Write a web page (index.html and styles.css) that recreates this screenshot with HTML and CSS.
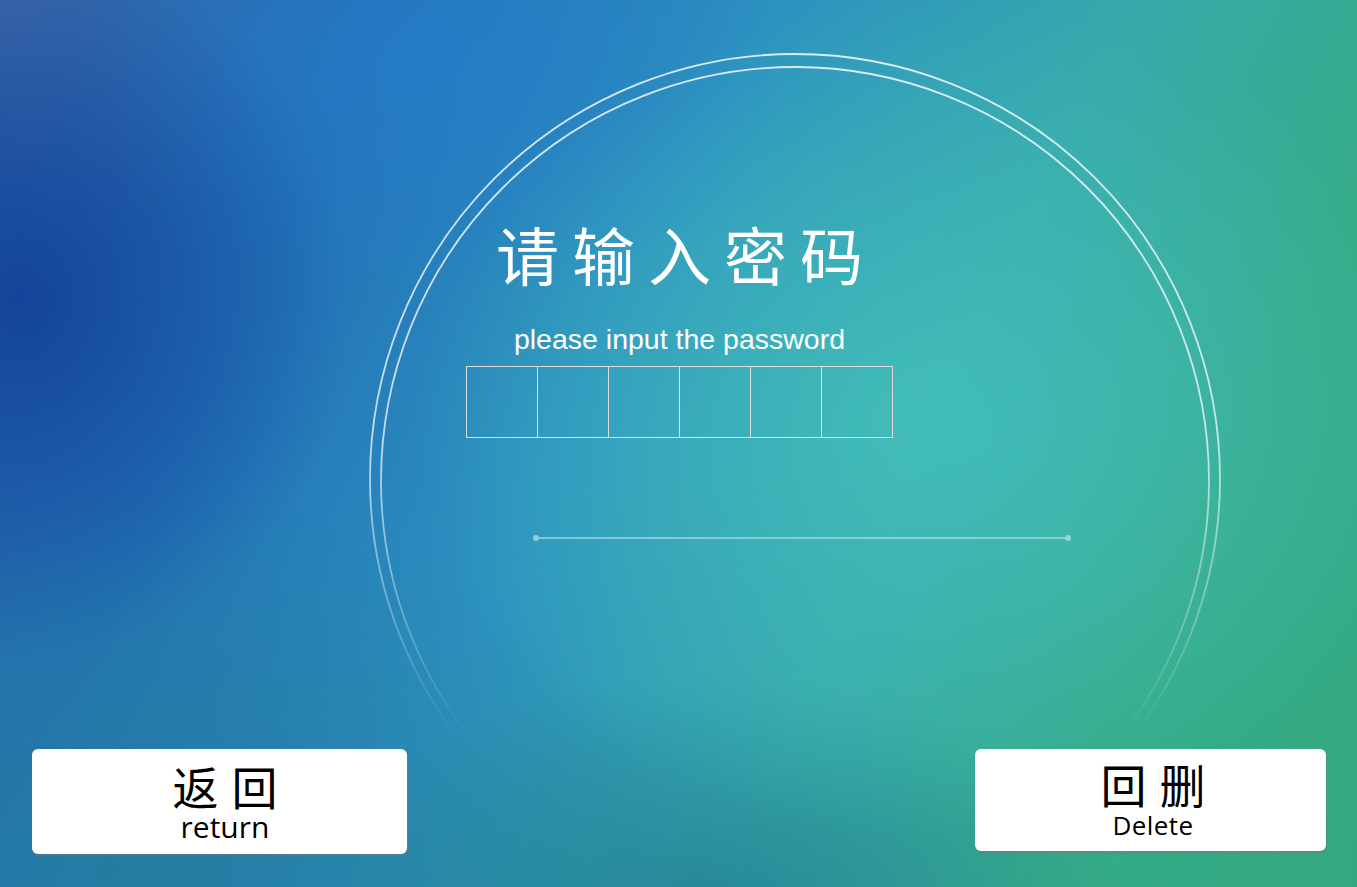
FILE: index.html
```html
<!DOCTYPE html>
<html lang="zh-CN">
<head>
<meta charset="utf-8">
<title>请输入密码</title>
<link rel="stylesheet" href="styles.css">
</head>
<body>
<div class="screen">
  <svg class="rings" width="1357" height="887" viewBox="0 0 1357 887" aria-hidden="true">
    <defs>
      <linearGradient id="fade" x1="0" y1="0" x2="0" y2="887" gradientUnits="userSpaceOnUse">
        <stop offset="0" stop-color="#fff" stop-opacity="1"/>
        <stop offset="0.50" stop-color="#fff" stop-opacity="0.85"/>
        <stop offset="0.66" stop-color="#fff" stop-opacity="0.45"/>
        <stop offset="0.83" stop-color="#fff" stop-opacity="0"/>
      </linearGradient>
      <mask id="ringmask" maskUnits="userSpaceOnUse" x="0" y="0" width="1357" height="887">
        <rect x="0" y="0" width="1357" height="887" fill="url(#fade)"/>
      </mask>
    </defs>
    <g mask="url(#ringmask)" fill="none" stroke="#eef7fa" stroke-opacity="0.9">
      <circle cx="795" cy="479" r="425" stroke-width="1.8"/>
      <circle cx="795" cy="481" r="414" stroke-width="1.8"/>
    </g>
  </svg>

  <main class="stage">
    <section class="entry">
      <h1 class="title">请输入密码</h1>
      <p class="subtitle">please input the password</p>
      <div class="pin">
        <span class="cell"></span>
        <span class="cell"></span>
        <span class="cell"></span>
        <span class="cell"></span>
        <span class="cell"></span>
        <span class="cell"></span>
      </div>
    </section>
    <div class="divider"><span class="dot"></span><span class="bar"></span><span class="dot"></span></div>
  </main>

  <footer class="actions">
    <button class="key key-back" type="button">
      <span class="key-cn">返回</span>
      <span class="key-en">return</span>
    </button>
    <button class="key key-del" type="button">
      <span class="key-cn">回删</span>
      <span class="key-en key-en-sm">Delete</span>
    </button>
  </footer>
</div>
</body>
</html>
```

FILE: styles.css
```css
html, body {
  margin: 0;
  padding: 0;
}

body {
  width: 1357px;
  height: 887px;
  overflow: hidden;
}

.screen {
  position: relative;
  width: 1357px;
  height: 887px;
  display: flex;
  flex-direction: column;
  justify-content: space-between;
  overflow: hidden;
  background:
    radial-gradient(ellipse 520px 420px at 930px 420px, rgba(68, 192, 188, 0.85), rgba(68, 192, 188, 0) 100%),
    radial-gradient(ellipse 330px 360px at 20px 300px, rgba(16, 62, 150, 0.85), rgba(16, 62, 150, 0) 100%),
    radial-gradient(ellipse 360px 240px at 430px 60px, rgba(38, 126, 205, 0.65), rgba(38, 126, 205, 0) 100%),
    radial-gradient(ellipse 420px 220px at 700px 900px, rgba(36, 130, 148, 0.85), rgba(36, 130, 148, 0) 100%),
    radial-gradient(ellipse 520px 380px at 150px 870px, rgba(36, 124, 158, 0.9), rgba(36, 124, 158, 0) 100%),
    radial-gradient(ellipse 300px 260px at 0px 0px, rgba(70, 110, 170, 0.6), rgba(70, 110, 170, 0) 100%),
    linear-gradient(115deg, #2a60aa 0%, #2272b6 22%, #2d92c0 44%, #37a9ab 64%, #36ab88 82%, #33a882 100%);
}

.rings {
  position: absolute;
  left: 0;
  top: 0;
  pointer-events: none;
}

.stage {
  position: relative;
  display: flex;
  flex-direction: column;
  padding-top: 215px;
}

.entry {
  margin-left: 466px;
  width: 427px;
  display: flex;
  flex-direction: column;
  align-items: center;
}

.title {
  margin: 0;
  padding-left: 13px;
  font-family: "Noto Sans CJK SC", "Noto Sans", sans-serif;
  font-weight: 400;
  font-size: 63px;
  line-height: 76px;
  letter-spacing: 13px;
  color: #ffffff;
  white-space: nowrap;
}

.subtitle {
  margin: 32px 0 0 0;
  font-family: "Liberation Sans", Arial, sans-serif;
  font-size: 28.5px;
  line-height: 32px;
  color: #ffffff;
  white-space: nowrap;
}

.pin {
  margin-top: 11px;
  display: flex;
  border-left: 1px solid #dcdcdc;
  border-top: 1px solid #dcdcdc;
  border-bottom: 1px solid #dcdcdc;
}

.cell {
  width: 70px;
  height: 70px;
  border-right: 1px solid #dcdcdc;
}

.divider {
  margin-left: 533px;
  margin-top: 97px;
  width: 538px;
  height: 6px;
  display: flex;
  align-items: center;
}

.dot {
  width: 6px;
  height: 6px;
  border-radius: 50%;
  background: rgba(175, 225, 230, 0.75);
  flex: none;
}

.bar {
  flex: 1;
  height: 2px;
  background: rgba(170, 222, 230, 0.65);
}

.actions {
  display: flex;
  justify-content: space-between;
  align-items: flex-start;
  padding: 0 31px 33px 32px;
}

.key {
  margin: 0;
  border: 0;
  background: #ffffff;
  border-radius: 6px;
  box-shadow: 1px 2px 2px rgba(120, 120, 120, 0.45);
  display: flex;
  flex-direction: column;
  align-items: center;
  justify-content: center;
  gap: 2px;
  color: #000000;
  cursor: pointer;
}

.key-back {
  width: 375px;
  height: 105px;
  padding: 0 0 0 11px;
}

.key-del {
  width: 351px;
  height: 102px;
  padding: 0 0 0 5px;
}

.key-cn {
  font-family: "Noto Sans CJK SC", "Noto Sans", sans-serif;
  font-size: 46px;
  line-height: 48px;
  letter-spacing: 13px;
  padding-left: 13px;
  white-space: nowrap;
}

.key-en {
  font-family: "Open Sans", "Noto Sans", sans-serif;
  font-size: 30px;
  line-height: 32px;
  white-space: nowrap;
}

.key-en-sm {
  font-size: 26px;
  letter-spacing: 0.4px;
}
```
